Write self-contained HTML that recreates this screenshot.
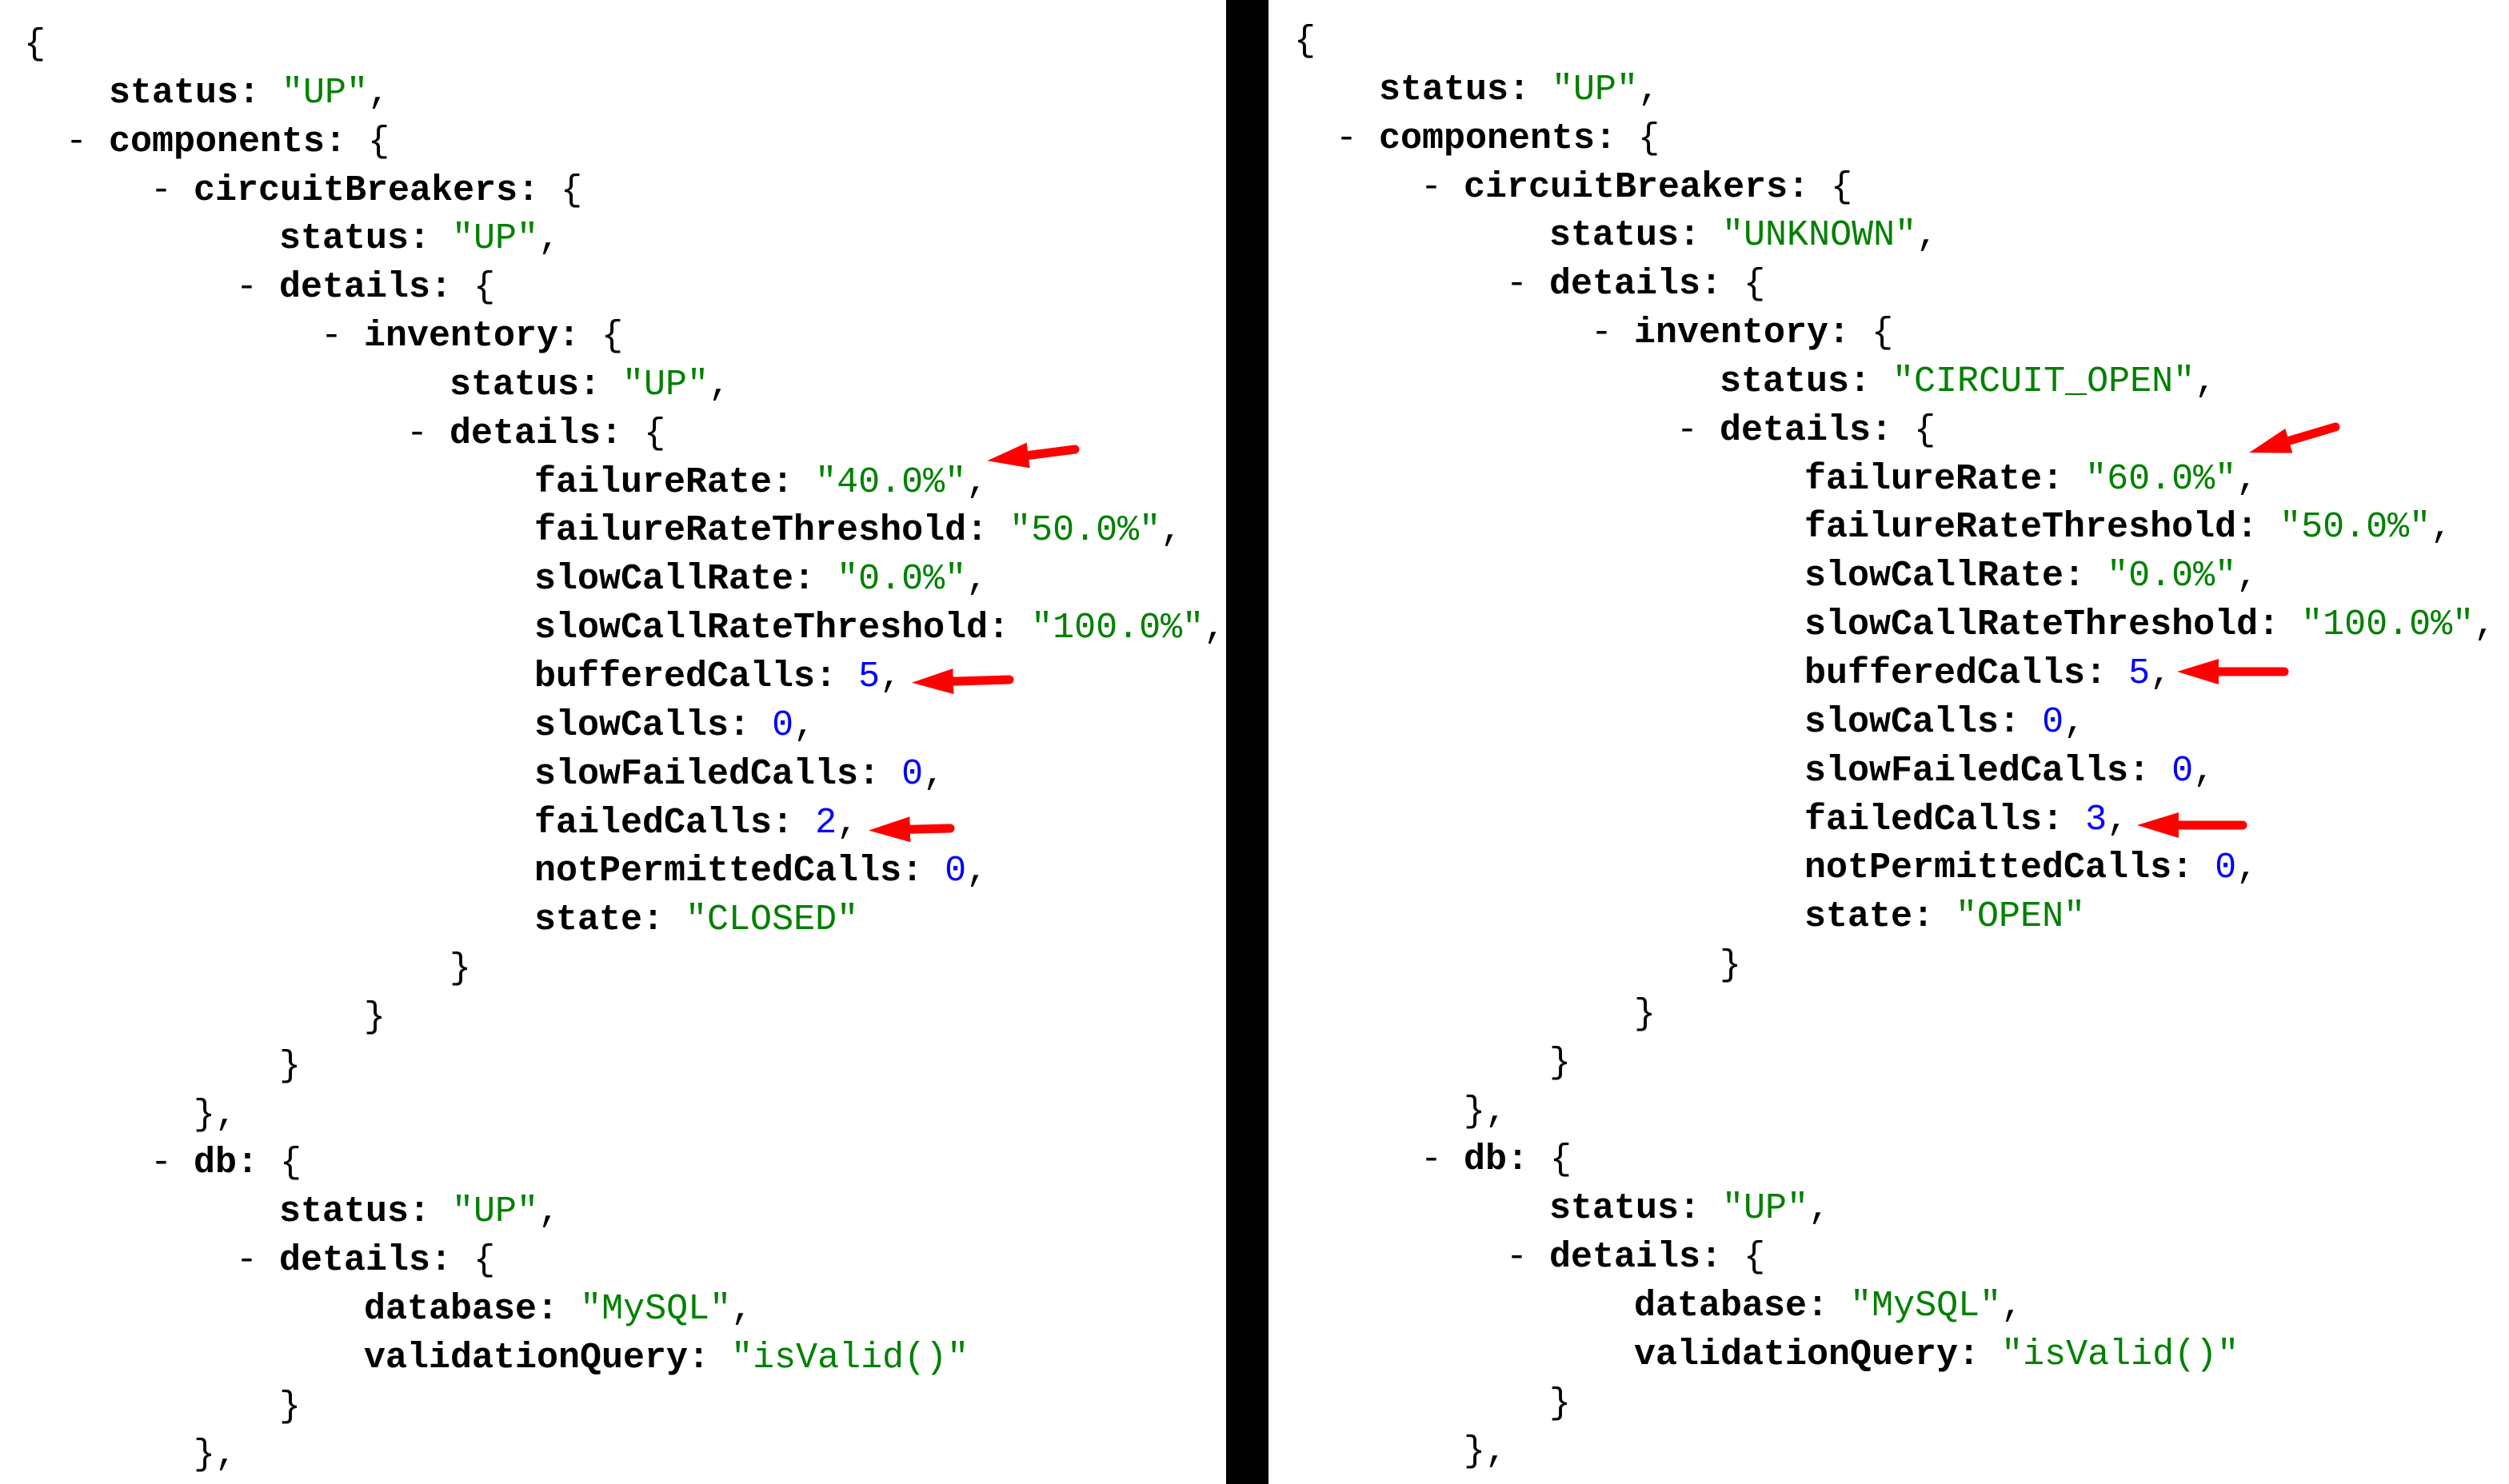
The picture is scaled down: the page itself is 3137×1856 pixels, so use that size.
<!DOCTYPE html>
<html><head><meta charset="utf-8"><style>
html,body{margin:0;padding:0;background:#fff;}
body{width:3137px;height:1856px;position:relative;overflow:hidden;font-family:"Liberation Mono","DejaVu Sans Mono",monospace;font-size:45px;color:#000;}
.p{position:absolute;top:0;width:1533px;}
.l{height:60.85px;line-height:60.85px;white-space:pre;position:relative;}
.l span{position:absolute;}
b{font-weight:bold;}
.s{color:#008000;font-weight:normal;}
.n{color:#0000ff;font-weight:normal;}
.bar{position:absolute;left:1533px;top:0;width:53px;height:1856px;background:#000;}
</style></head><body>
<div class="p" style="left:0;top:26px">
<div class="l"><span style="left:30px">{</span></div>
<div class="l"><span style="left:136px"><b>status:</b> <span class="s" style="position:static">"UP"</span>,</span></div>
<div class="l"><span style="left:82px">- <b>components:</b> {</span></div>
<div class="l"><span style="left:188px">- <b>circuitBreakers:</b> {</span></div>
<div class="l"><span style="left:349px"><b>status:</b> <span class="s" style="position:static">"UP"</span>,</span></div>
<div class="l"><span style="left:295px">- <b>details:</b> {</span></div>
<div class="l"><span style="left:401px">- <b>inventory:</b> {</span></div>
<div class="l"><span style="left:562px"><b>status:</b> <span class="s" style="position:static">"UP"</span>,</span></div>
<div class="l"><span style="left:508px">- <b>details:</b> {</span></div>
<div class="l"><span style="left:668px"><b>failureRate:</b> <span class="s" style="position:static">"40.0%"</span>,</span></div>
<div class="l"><span style="left:668px"><b>failureRateThreshold:</b> <span class="s" style="position:static">"50.0%"</span>,</span></div>
<div class="l"><span style="left:668px"><b>slowCallRate:</b> <span class="s" style="position:static">"0.0%"</span>,</span></div>
<div class="l"><span style="left:668px"><b>slowCallRateThreshold:</b> <span class="s" style="position:static">"100.0%"</span>,</span></div>
<div class="l"><span style="left:668px"><b>bufferedCalls:</b> <span class="n" style="position:static">5</span>,</span></div>
<div class="l"><span style="left:668px"><b>slowCalls:</b> <span class="n" style="position:static">0</span>,</span></div>
<div class="l"><span style="left:668px"><b>slowFailedCalls:</b> <span class="n" style="position:static">0</span>,</span></div>
<div class="l"><span style="left:668px"><b>failedCalls:</b> <span class="n" style="position:static">2</span>,</span></div>
<div class="l"><span style="left:668px"><b>notPermittedCalls:</b> <span class="n" style="position:static">0</span>,</span></div>
<div class="l"><span style="left:668px"><b>state:</b> <span class="s" style="position:static">"CLOSED"</span></span></div>
<div class="l"><span style="left:562px">}</span></div>
<div class="l"><span style="left:455px">}</span></div>
<div class="l"><span style="left:349px">}</span></div>
<div class="l"><span style="left:242px">},</span></div>
<div class="l"><span style="left:188px">- <b>db:</b> {</span></div>
<div class="l"><span style="left:349px"><b>status:</b> <span class="s" style="position:static">"UP"</span>,</span></div>
<div class="l"><span style="left:295px">- <b>details:</b> {</span></div>
<div class="l"><span style="left:455px"><b>database:</b> <span class="s" style="position:static">"MySQL"</span>,</span></div>
<div class="l"><span style="left:455px"><b>validationQuery:</b> <span class="s" style="position:static">"isValid()"</span></span></div>
<div class="l"><span style="left:349px">}</span></div>
<div class="l"><span style="left:242px">},</span></div>
</div>
<div class="bar"></div>
<div class="p" style="left:1588px;top:22px;width:1549px">
<div class="l"><span style="left:30px">{</span></div>
<div class="l"><span style="left:136px"><b>status:</b> <span class="s" style="position:static">"UP"</span>,</span></div>
<div class="l"><span style="left:82px">- <b>components:</b> {</span></div>
<div class="l"><span style="left:188px">- <b>circuitBreakers:</b> {</span></div>
<div class="l"><span style="left:349px"><b>status:</b> <span class="s" style="position:static">"UNKNOWN"</span>,</span></div>
<div class="l"><span style="left:295px">- <b>details:</b> {</span></div>
<div class="l"><span style="left:401px">- <b>inventory:</b> {</span></div>
<div class="l"><span style="left:562px"><b>status:</b> <span class="s" style="position:static">"CIRCUIT_OPEN"</span>,</span></div>
<div class="l"><span style="left:508px">- <b>details:</b> {</span></div>
<div class="l"><span style="left:668px"><b>failureRate:</b> <span class="s" style="position:static">"60.0%"</span>,</span></div>
<div class="l"><span style="left:668px"><b>failureRateThreshold:</b> <span class="s" style="position:static">"50.0%"</span>,</span></div>
<div class="l"><span style="left:668px"><b>slowCallRate:</b> <span class="s" style="position:static">"0.0%"</span>,</span></div>
<div class="l"><span style="left:668px"><b>slowCallRateThreshold:</b> <span class="s" style="position:static">"100.0%"</span>,</span></div>
<div class="l"><span style="left:668px"><b>bufferedCalls:</b> <span class="n" style="position:static">5</span>,</span></div>
<div class="l"><span style="left:668px"><b>slowCalls:</b> <span class="n" style="position:static">0</span>,</span></div>
<div class="l"><span style="left:668px"><b>slowFailedCalls:</b> <span class="n" style="position:static">0</span>,</span></div>
<div class="l"><span style="left:668px"><b>failedCalls:</b> <span class="n" style="position:static">3</span>,</span></div>
<div class="l"><span style="left:668px"><b>notPermittedCalls:</b> <span class="n" style="position:static">0</span>,</span></div>
<div class="l"><span style="left:668px"><b>state:</b> <span class="s" style="position:static">"OPEN"</span></span></div>
<div class="l"><span style="left:562px">}</span></div>
<div class="l"><span style="left:455px">}</span></div>
<div class="l"><span style="left:349px">}</span></div>
<div class="l"><span style="left:242px">},</span></div>
<div class="l"><span style="left:188px">- <b>db:</b> {</span></div>
<div class="l"><span style="left:349px"><b>status:</b> <span class="s" style="position:static">"UP"</span>,</span></div>
<div class="l"><span style="left:295px">- <b>details:</b> {</span></div>
<div class="l"><span style="left:455px"><b>database:</b> <span class="s" style="position:static">"MySQL"</span>,</span></div>
<div class="l"><span style="left:455px"><b>validationQuery:</b> <span class="s" style="position:static">"isValid()"</span></span></div>
<div class="l"><span style="left:349px">}</span></div>
<div class="l"><span style="left:242px">},</span></div>
</div>
<svg width="3137" height="1856" style="position:absolute;left:0;top:0" xmlns="http://www.w3.org/2000/svg">
<defs><marker id="h" markerUnits="userSpaceOnUse" markerWidth="52" markerHeight="34" viewBox="0 -17 52 34" refX="27" refY="0" orient="auto"><path d="M0,-16 L52,0 L0,16 z" fill="#ff0000"/></marker></defs>
<g stroke="#ff0000" stroke-width="11" stroke-linecap="round" fill="none">
<line x1="1344" y1="562" x2="1259" y2="573" marker-end="url(#h)"/>
<line x1="1262" y1="850" x2="1165" y2="853" marker-end="url(#h)"/>
<line x1="1188" y1="1036" x2="1111" y2="1038" marker-end="url(#h)"/>
<line x1="2920" y1="534" x2="2836" y2="559" marker-end="url(#h)"/>
<line x1="2856" y1="840" x2="2747" y2="840" marker-end="url(#h)"/>
<line x1="2804" y1="1032" x2="2697" y2="1032" marker-end="url(#h)"/>
</g>
</svg>
</body></html>
